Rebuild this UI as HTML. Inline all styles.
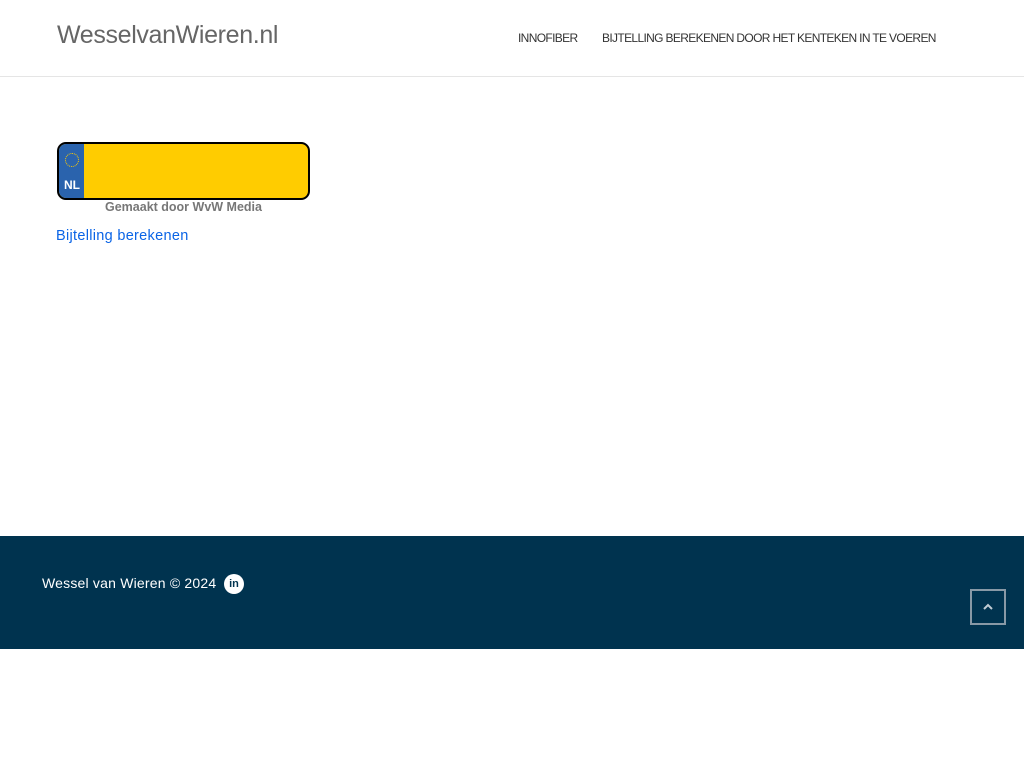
<!DOCTYPE html>
<html><head><meta charset="utf-8"><style>
*{margin:0;padding:0;box-sizing:border-box}
body{width:1024px;height:768px;background:#fff;font-family:"Liberation Sans",sans-serif;position:relative;overflow:hidden}
.hdr{position:absolute;top:0;left:0;width:1024px;height:77px;border-bottom:1px solid #e5e5e5}
.logo{position:absolute;left:57px;top:21px;font-size:25px;color:#666;font-weight:300;letter-spacing:-0.35px}
.nav{position:absolute;top:31px;font-size:12px;color:#333;letter-spacing:-0.65px}
.plate{position:absolute;left:57px;top:142px;width:253px;height:58px;border:2px solid #000;border-radius:9px;background:#ffcc00;overflow:hidden}
.eu{position:absolute;left:0;top:0;width:25px;height:100%;background:#2a63ad}
.eu .st{position:absolute;left:6px;top:9px;width:14px;height:14px;border:1.5px dotted #ffcc00;border-radius:50%}
.eu .nl{position:absolute;left:5px;top:34px;color:#fff;font-weight:bold;font-size:12px}
.made{position:absolute;left:105px;top:200px;font-size:12.5px;font-weight:bold;color:#777}
.link{position:absolute;left:56px;top:228px;font-size:14.5px;color:#0a64e6;letter-spacing:0.3px}
.ftr{position:absolute;left:0;top:536px;width:1024px;height:113px;background:#00334f}
.ftr .t{position:absolute;left:42px;top:39px;color:#fff;font-size:14px;letter-spacing:0.2px}
.li{position:absolute;left:224px;top:38px;width:20px;height:20px;border-radius:50%;background:#fff;color:#00334f;font-size:11px;font-weight:bold;text-align:center;line-height:20px}
.up{position:absolute;left:970px;top:53px;width:36px;height:36px;border:2px solid #8899a6}
</style></head><body>
<div class="hdr">
<div class="logo">WesselvanWieren.nl</div>
<div class="nav" style="left:518px">INNOFIBER</div>
<div class="nav" style="left:602px">BIJTELLING BEREKENEN DOOR HET KENTEKEN IN TE VOEREN</div>
</div>
<div class="plate"><div class="eu"><div class="st"></div><div class="nl">NL</div></div></div>
<div class="made">Gemaakt door WvW Media</div>
<div class="link">Bijtelling berekenen</div>
<div class="ftr">
<div class="t">Wessel van Wieren © 2024</div>
<div class="li">in</div>
<div class="up"><svg width="32" height="32" viewBox="0 0 32 32"><path d="M12 18l4-4 4 4" stroke="#c0cbd3" stroke-width="2" fill="none"/></svg></div>
</div>
</body></html>
